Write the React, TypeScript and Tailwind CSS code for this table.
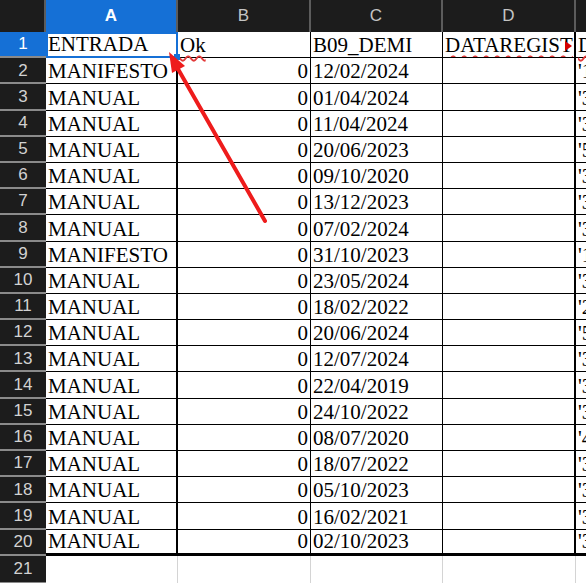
const rows: [string, string, string, string][] = [
  ["MANIFESTO", "0", "12/02/2024", "'1"],
  ["MANUAL", "0", "01/04/2024", "'3"],
  ["MANUAL", "0", "11/04/2024", "'3"],
  ["MANUAL", "0", "20/06/2023", "'5"],
  ["MANUAL", "0", "09/10/2020", "'3"],
  ["MANUAL", "0", "13/12/2023", "'3"],
  ["MANUAL", "0", "07/02/2024", "'3"],
  ["MANIFESTO", "0", "31/10/2023", "'1"],
  ["MANUAL", "0", "23/05/2024", "'3"],
  ["MANUAL", "0", "18/02/2022", "'2"],
  ["MANUAL", "0", "20/06/2024", "'5"],
  ["MANUAL", "0", "12/07/2024", "'3"],
  ["MANUAL", "0", "22/04/2019", "'3"],
  ["MANUAL", "0", "24/10/2022", "'3"],
  ["MANUAL", "0", "08/07/2020", "'4"],
  ["MANUAL", "0", "18/07/2022", "'3"],
  ["MANUAL", "0", "05/10/2023", "'3"],
  ["MANUAL", "0", "16/02/2021", "'3"],
  ["MANUAL", "0", "02/10/2023", "'3"],
];

const serif = "font-['Liberation_Serif',serif] text-[21px] leading-[23px] text-black";
const sans = "font-['Liberation_Sans',Arial,sans-serif] text-[17px]";
const wavy = "underline decoration-wavy decoration-[#e23a3a] decoration-[1.5px] underline-offset-[3px]";

function RowHead({ n, active }: { n: number; active?: boolean }) {
  return (
    <div
      className={`w-[46px] shrink-0 flex items-center justify-center border-b-2 border-[#8a8a8a] ${sans} ${
        active ? "bg-[#1570d6] text-white" : "bg-[#1c1c1c] text-[#d2d2d2]"
      }`}
    >
      {n}
    </div>
  );
}

function ColHead({ label, w, active }: { label: string; w: string; active?: boolean }) {
  return (
    <div
      className={`${w} shrink-0 flex items-center justify-center border-r-2 border-[#5c5c5c] ${sans} ${
        active ? "bg-[#1570d6] text-white font-bold" : "text-[#c4c4c4]"
      }`}
    >
      {label}
    </div>
  );
}

export default function App() {
  return (
    <div className="relative w-[586px] h-[583px] overflow-hidden bg-white">
      {/* column headers */}
      <div className="flex h-[32px] bg-[#1c1c1c]">
        <div className="w-[46px] shrink-0 border-r-2 border-[#5c5c5c]" />
        <ColHead label="A" w="w-[132px]" active />
        <ColHead label="B" w="w-[133px]" />
        <ColHead label="C" w="w-[132px]" />
        <ColHead label="D" w="w-[133px]" />
        <div className="flex-1" />
      </div>

      {/* row 1 */}
      <div className="flex h-[26.2px]">
        <RowHead n={1} active />
        <div className={`relative w-[132px] shrink-0 flex items-end border-2 border-[#1570d6] ${serif}`}>
          ENTRADA
          <span className="absolute -right-[4px] -bottom-[4px] w-[6px] h-[6px] bg-[#1570d6]" />
        </div>
        <div className={`w-[133px] shrink-0 flex items-end pl-[2px] border-r border-b border-black ${serif}`}>
          <span className={wavy}>Ok</span>
        </div>
        <div className={`w-[132px] shrink-0 flex items-end pl-[2px] border-r border-b border-black ${serif}`}>
          B09_DEMI
        </div>
        <div className={`relative w-[133px] shrink-0 flex items-end pl-[2px] overflow-hidden border-r-2 border-b border-black ${serif}`}>
          <span className={`whitespace-nowrap ${wavy}`}>DATAREGIST</span>
          <span className="absolute right-[2px] top-[9px] w-0 h-0 border-y-[5px] border-y-transparent border-l-[7px] border-l-[#d40000]" />
        </div>
        <div className={`flex-1 flex items-end pl-[2px] border-b border-black ${serif}`}>
          <span className={wavy}>D</span>
        </div>
      </div>

      {rows.map((r, i) => {
        const last = i === rows.length - 1;
        const bb = last ? "border-b-[3px]" : "border-b";
        return (
          <div key={i} className="flex h-[26.2px]">
            <RowHead n={i + 2} />
            <div className={`w-[132px] shrink-0 flex items-end pl-[2px] border-r-2 ${bb} border-black ${serif}`}>
              {r[0]}
            </div>
            <div className={`w-[133px] shrink-0 flex items-end justify-end pr-[2px] border-r ${bb} border-black ${serif}`}>
              {r[1]}
            </div>
            <div className={`w-[132px] shrink-0 flex items-end pl-[2px] border-r ${bb} border-black ${serif}`}>
              {r[2]}
            </div>
            <div className={`w-[133px] shrink-0 border-r-2 ${bb} border-black`} />
            <div className={`flex-1 flex items-end pl-[2px] ${bb} border-black ${serif}`}>{r[3]}</div>
          </div>
        );
      })}

      {/* row 21 */}
      <div className="flex h-[28px]">
        <RowHead n={21} />
        <div className="w-[132px] shrink-0 border-r border-[#d4d4d4]" />
        <div className="w-[133px] shrink-0 border-r border-[#d4d4d4]" />
        <div className="w-[132px] shrink-0 border-r border-[#d4d4d4]" />
        <div className="w-[133px] shrink-0 border-r border-[#d4d4d4]" />
        <div className="flex-1" />
      </div>

      {/* red arrow annotation */}
      <svg className="absolute left-0 top-0 pointer-events-none" width="586" height="583">
        <line x1="265" y1="221" x2="178" y2="69" stroke="#ee1c1c" strokeWidth="4" strokeLinecap="round" />
        <polygon points="169,52 185,66 172,73" fill="#ee1c1c" />
      </svg>
    </div>
  );
}
